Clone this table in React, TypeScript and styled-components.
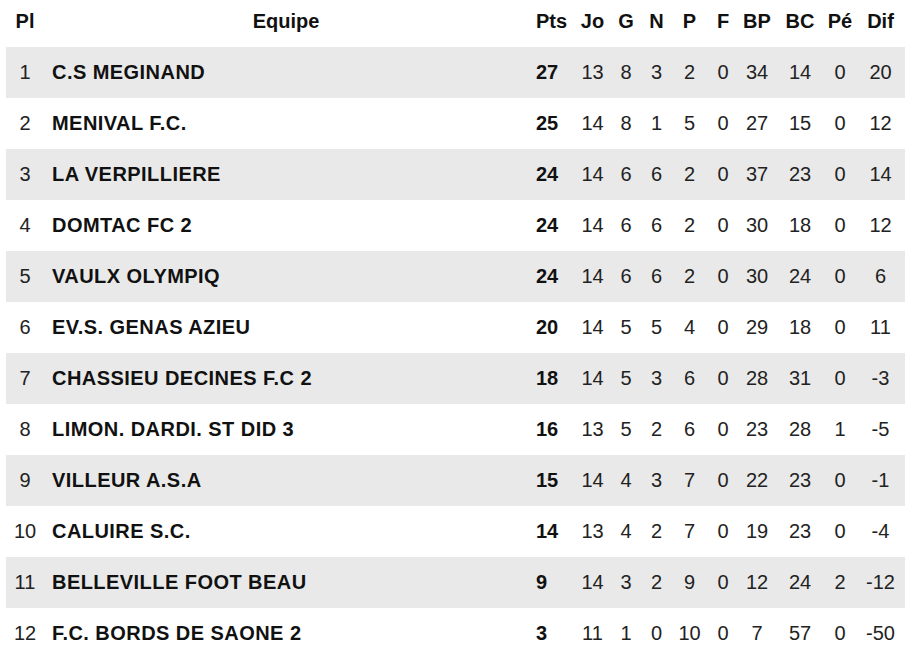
import React from 'react';
import styled, { createGlobalStyle } from 'styled-components';

const GlobalStyle = createGlobalStyle`
  html, body {
    margin: 0;
    padding: 0;
    background: #fff;
  }
  body {
    font-family: 'Liberation Sans', Arial, sans-serif;
    color: #222;
  }
`;

type Align = 'left' | 'center';

interface IColumn {
  key: string;
  label: string;
  width: number;
  align: Align;
  pad?: number;
}

const columns: IColumn[] = [
  { key: 'pl', label: 'Pl', width: 38, align: 'center' },
  { key: 'team', label: 'Equipe', width: 484, align: 'left', pad: 8 },
  { key: 'pts', label: 'Pts', width: 47, align: 'left', pad: 8 },
  { key: 'jo', label: 'Jo', width: 35, align: 'center' },
  { key: 'g', label: 'G', width: 32, align: 'center' },
  { key: 'n', label: 'N', width: 29, align: 'center' },
  { key: 'p', label: 'P', width: 37, align: 'center' },
  { key: 'f', label: 'F', width: 30, align: 'center' },
  { key: 'bp', label: 'BP', width: 38, align: 'center' },
  { key: 'bc', label: 'BC', width: 48, align: 'center' },
  { key: 'pe', label: 'Pé', width: 32, align: 'center' },
  { key: 'dif', label: 'Dif', width: 49, align: 'center', pad: 6 },
];

const standings: (string | number)[][] = [
  [1, 'C.S MEGINAND', 27, 13, 8, 3, 2, 0, 34, 14, 0, 20],
  [2, 'MENIVAL F.C.', 25, 14, 8, 1, 5, 0, 27, 15, 0, 12],
  [3, 'LA VERPILLIERE', 24, 14, 6, 6, 2, 0, 37, 23, 0, 14],
  [4, 'DOMTAC FC 2', 24, 14, 6, 6, 2, 0, 30, 18, 0, 12],
  [5, 'VAULX OLYMPIQ', 24, 14, 6, 6, 2, 0, 30, 24, 0, 6],
  [6, 'EV.S. GENAS AZIEU', 20, 14, 5, 5, 4, 0, 29, 18, 0, 11],
  [7, 'CHASSIEU DECINES F.C 2', 18, 14, 5, 3, 6, 0, 28, 31, 0, -3],
  [8, 'LIMON. DARDI. ST DID 3', 16, 13, 5, 2, 6, 0, 23, 28, 1, -5],
  [9, 'VILLEUR A.S.A', 15, 14, 4, 3, 7, 0, 22, 23, 0, -1],
  [10, 'CALUIRE S.C.', 14, 13, 4, 2, 7, 0, 19, 23, 0, -4],
  [11, 'BELLEVILLE FOOT BEAU', 9, 14, 3, 2, 9, 0, 12, 24, 2, -12],
  [12, 'F.C. BORDS DE SAONE 2', 3, 11, 1, 0, 10, 0, 7, 57, 0, -50],
];

const Page = styled.div`
  padding-left: 6px;
`;

const Table = styled.table`
  width: 899px;
  table-layout: fixed;
  border-collapse: collapse;
  font-size: 20px;
`;

const HeadCell = styled.th<{ $pad?: number; $align?: Align }>`
  height: 47px;
  padding: 0 ${(p) => p.$pad ?? 0}px;
  line-height: 43px;
  vertical-align: top;
  text-align: ${(p) => p.$align ?? 'center'};
  font-weight: bold;
  color: #111;
  white-space: nowrap;
`;

const Row = styled.tr<{ $shaded: boolean }>`
  background: ${(p) => (p.$shaded ? '#e9e9e9' : '#fff')};
`;

const Cell = styled.td<{ $align: Align; $pad?: number; $bold?: boolean }>`
  height: 51px;
  padding: 0 ${(p) => p.$pad ?? 0}px;
  vertical-align: middle;
  text-align: ${(p) => p.$align};
  font-weight: ${(p) => (p.$bold ? 'bold' : 'normal')};
  color: ${(p) => (p.$bold ? '#111' : '#222')};
  white-space: nowrap;
`;

const TeamCell = styled(Cell)`
  letter-spacing: 0.45px;
`;

export default function App() {
  return (
    <Page>
      <GlobalStyle />
      <Table>
        <colgroup>
          {columns.map((c) => (
            <col key={c.key} style={{ width: c.width }} />
          ))}
        </colgroup>
        <thead>
          <tr>
            {columns.map((c) => (
              <HeadCell
                key={c.key}
                $pad={c.key === 'team' ? 0 : c.pad}
                $align={c.key === 'pts' ? 'left' : 'center'}
              >
                {c.label}
              </HeadCell>
            ))}
          </tr>
        </thead>
        <tbody>
          {standings.map((row, i) => (
            <Row key={row[0]} $shaded={i % 2 === 0}>
              {row.map((value, j) => {
                const col = columns[j];
                if (col.key === 'team') {
                  return (
                    <TeamCell key={col.key} $align="left" $pad={col.pad} $bold>
                      {value}
                    </TeamCell>
                  );
                }
                return (
                  <Cell key={col.key} $align={col.align} $pad={col.pad} $bold={col.key === 'pts'}>
                    {value}
                  </Cell>
                );
              })}
            </Row>
          ))}
        </tbody>
      </Table>
    </Page>
  );
}
